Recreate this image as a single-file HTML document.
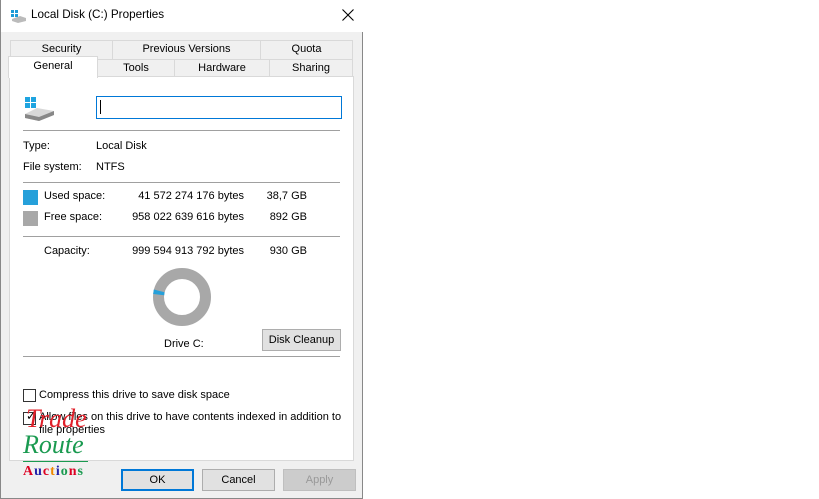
<!DOCTYPE html>
<html><head><meta charset="utf-8"><style>
*{margin:0;padding:0;box-sizing:border-box}
body{width:819px;height:499px;background:#fff;font-family:"Liberation Sans",sans-serif;font-size:11px;color:#000;position:relative;overflow:hidden}
.a{position:absolute;white-space:nowrap}
.win{position:absolute;left:0;top:0;width:363px;height:499px;background:#f0f0f0;border:1px solid #888;border-top:none}
.title{position:absolute;left:0;top:0;width:362px;height:32px;background:#fff}
.tab{position:absolute;background:#f0f0f0;border:1px solid #d9d9d9;border-bottom:none;text-align:center;line-height:17px}
.panel{position:absolute;left:8px;top:76px;width:345px;height:385px;background:#fff;border:1px solid #d9d9d9}
.hr{position:absolute;left:22px;width:317px;height:1px;background:#a0a0a0}
.btn{position:absolute;height:22px;background:#e1e1e1;border:1px solid #adadad;text-align:center;line-height:20px}
.cb{position:absolute;width:13px;height:13px;border:1px solid #333;background:#fff}
</style></head><body>
<div class="win">
<div class="title"></div>
<svg class="a" style="left:9px;top:9px" width="16" height="14" viewBox="0 0 16 14"><rect x="1" y="1" width="3" height="3" fill="#1e9bd7"/><rect x="5" y="1" width="3" height="3" fill="#1e9bd7"/><rect x="1" y="5" width="3" height="3" fill="#1e9bd7"/><rect x="5" y="5" width="3" height="3" fill="#1e9bd7"/><path d="M2 10 L10 7 L16 9 L16 12 L8 14 L2 12Z" fill="#bbb"/></svg>
<div class="a" style="left:30px;top:8px;font-size:11.7px">Local Disk (C:) Properties</div>
<svg class="a" style="left:341px;top:9px" width="12" height="12" viewBox="0 0 12 12"><path d="M0.5 0.5 L11.5 11.5 M11.5 0.5 L0.5 11.5" stroke="#000" stroke-width="1.1"/></svg>

<div class="tab" style="left:9px;top:40px;width:103px;height:19px">Security</div>
<div class="tab" style="left:111px;top:40px;width:149px;height:19px">Previous Versions</div>
<div class="tab" style="left:259px;top:40px;width:93px;height:19px">Quota</div>
<div class="tab" style="left:96px;top:59px;width:78px;height:18px">Tools</div>
<div class="tab" style="left:173px;top:59px;width:96px;height:18px">Hardware</div>
<div class="tab" style="left:268px;top:59px;width:84px;height:18px">Sharing</div>
<div class="panel"></div>
<div class="tab" style="left:7px;top:56px;width:90px;height:22px;background:#fff;line-height:19px;z-index:2">General</div>

<svg class="a" style="left:22px;top:96px" width="32" height="26" viewBox="0 0 32 26"><rect x="2" y="1" width="5" height="5" fill="#1ea4e0"/><rect x="8" y="1" width="5" height="5" fill="#1ea4e0"/><rect x="2" y="7" width="5" height="5" fill="#1ea4e0"/><rect x="8" y="7" width="5" height="5" fill="#1ea4e0"/><path d="M2 18 L14 12 L31 15 L31 19 L16 25 L2 22Z" fill="#d8d8d8"/><path d="M2 18 L16 21 L31 15 L31 19 L16 25 L2 22Z" fill="#888"/></svg>
<div class="a" style="left:95px;top:96px;width:246px;height:23px;border:1px solid #0078d7;background:#fff"></div>
<div class="a" style="left:99px;top:100px;width:1px;height:14px;background:#000"></div>
<div class="hr" style="top:130px"></div>
<div class="a" style="left:22px;top:140px">Type:</div><div class="a" style="left:95px;top:140px">Local Disk</div>
<div class="a" style="left:22px;top:161px">File system:</div><div class="a" style="left:95px;top:161px">NTFS</div>
<div class="hr" style="top:182px"></div>
<div class="a" style="left:22px;top:190px;width:15px;height:15px;background:#26a0da"></div>
<div class="a" style="left:43px;top:190px">Used space:</div>
<div class="a" style="left:130px;top:190px;width:113px;text-align:right">41 572 274 176 bytes</div>
<div class="a" style="left:250px;top:190px;width:56px;text-align:right">38,7 GB</div>
<div class="a" style="left:22px;top:211px;width:15px;height:15px;background:#a8a8a8"></div>
<div class="a" style="left:43px;top:211px">Free space:</div>
<div class="a" style="left:130px;top:211px;width:113px;text-align:right">958 022 639 616 bytes</div>
<div class="a" style="left:250px;top:211px;width:56px;text-align:right">892 GB</div>
<div class="hr" style="top:236px"></div>
<div class="a" style="left:43px;top:245px">Capacity:</div>
<div class="a" style="left:130px;top:245px;width:113px;text-align:right">999 594 913 792 bytes</div>
<div class="a" style="left:250px;top:245px;width:56px;text-align:right">930 GB</div>
<svg class="a" style="left:150px;top:266px" width="62" height="62" viewBox="0 0 62 62"><circle cx="31" cy="31" r="23.5" fill="none" stroke="#a8a8a8" stroke-width="11"/><path d="M2.2 28 L2.8 23.5 L13.6 26.3 L13.2 29.3Z" fill="#26a0da"/></svg>
<div class="a" style="left:163px;top:338px">Drive C:</div>
<div class="btn" style="left:261px;top:329px;width:79px">Disk Cleanup</div>
<div class="hr" style="top:356px"></div>
<div class="cb" style="left:22px;top:389px"></div>
<div class="a" style="left:38px;top:389px">Compress this drive to save disk space</div>
<div class="cb" style="left:22px;top:412px"></div>
<div class="a" style="left:25px;top:409px;font-size:12px">✓</div>
<div class="a" style="left:38px;top:411px">Allow files on this drive to have contents indexed in addition to</div>
<div class="a" style="left:38px;top:424px">file properties</div>
<div class="a" style="left:25px;top:404px;font-family:'Liberation Serif',serif;font-style:italic;font-size:26px;color:#e0202a">Trade</div>
<div class="a" style="left:22px;top:430px;font-family:'Liberation Serif',serif;font-style:italic;font-size:26px;color:#1a9a50">Route</div>
<div class="a" style="left:22px;top:461px;width:65px;height:1px;background:#1a9a50"></div>
<div class="a" style="left:22px;top:464px;font-family:'Liberation Serif',serif;font-weight:bold;font-size:14px;letter-spacing:1px"><span style="color:#d02">A</span><span style="color:#22a">u</span><span style="color:#d02">c</span><span style="color:#e80">t</span><span style="color:#22a">i</span><span style="color:#1a9a50">o</span><span style="color:#d02">n</span><span style="color:#1a9a50">s</span></div>
<div class="btn" style="left:120px;top:469px;width:73px;border:2px solid #0078d7;line-height:18px">OK</div>
<div class="btn" style="left:201px;top:469px;width:73px">Cancel</div>
<div class="btn" style="left:282px;top:469px;width:73px;color:#999;background:#ccc;border-color:#bfbfbf">Apply</div>
</div>
</body></html>
